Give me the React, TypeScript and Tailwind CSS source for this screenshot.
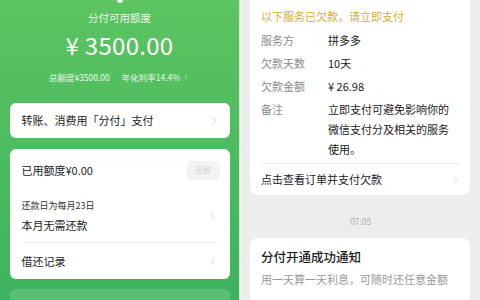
import { ChevronRight } from 'lucide-react';

const font = { fontFamily: '"Noto Sans CJK SC", "Noto Sans", sans-serif' };

const debtRows = [
  { label: '服务方', value: '拼多多' },
  { label: '欠款天数', value: '10天' },
  { label: '欠款金额', value: '¥ 26.98' },
];

export default function App() {
  return (
    <div className="flex w-[480px] h-[300px] overflow-hidden bg-[#ededed]" style={font}>
      {/* left: 分付 green page */}
      <div className="relative w-[239px] h-full shrink-0 bg-gradient-to-b from-[#5cc460] to-[#3db35f] flex flex-col items-center">
        <div className="shrink-0 w-[6px] h-[3px] rounded-b bg-white/90" />
        <div className="shrink-0 mt-[8px] text-[10.5px] leading-[14px] text-white/85">分付可用额度</div>
        <div className="shrink-0 mt-[6px] text-[24px] leading-[28px] text-white tracking-[0.3px]">¥ 3500.00</div>
        <div className="shrink-0 mt-[12px] flex items-center text-[8.5px] leading-[12px] text-white/85">
          <span>总额度¥3500.00</span>
          <span className="ml-[12px]">年化利率14.4%</span>
          <ChevronRight className="ml-[2px] w-[8px] h-[8px] text-white/70" strokeWidth={2} />
        </div>

        <div className="shrink-0 mt-[20px] w-[220px] h-[35px] rounded-[6px] bg-white flex items-center justify-between pl-[12px] pr-[10px]">
          <span className="text-[11px] text-[#222]">转账、消费用「分付」支付</span>
          <ChevronRight className="w-[11px] h-[11px] text-[#bbb]" strokeWidth={1.6} />
        </div>

        <div className="shrink-0 mt-[11px] w-[220px] rounded-[6px] bg-white pl-[12px] pr-[10px]">
          <div className="h-[42px] flex items-center justify-between">
            <span className="text-[11px] text-[#222]">已用额度¥0.00</span>
            <span className="w-[33px] h-[19px] rounded-[4px] bg-[#f3f3f3] text-[8px] text-[#d0d0d0] flex items-center justify-center">还款</span>
          </div>
          <div className="h-[52px] flex items-center justify-between border-b border-[#f0f0f0] mr-[2px]">
            <div className="flex flex-col">
              <span className="text-[9px] leading-[12px] text-[#333]">还款日为每月23日</span>
              <span className="mt-[5px] text-[11px] leading-[16px] text-[#222]">本月无需还款</span>
            </div>
            <ChevronRight className="w-[11px] h-[11px] text-[#bbb]" strokeWidth={1.6} />
          </div>
          <div className="h-[36px] flex items-center justify-between mr-[2px]">
            <span className="text-[11px] text-[#222]">借还记录</span>
            <ChevronRight className="w-[11px] h-[11px] text-[#bbb]" strokeWidth={1.6} />
          </div>
        </div>

        <div className="shrink-0 mt-[10px] w-[220px] h-[30px] rounded-[6px] bg-white/15" />
      </div>

      <div className="w-[2px] h-full shrink-0 bg-[#f7f7f7] border-l border-[#d8e6d8]" />

      {/* right: notification list */}
      <div className="flex-1 h-full flex flex-col bg-[#ededed]">
        <div className="shrink-0 ml-[9px] mr-[10px] -mt-[8px] rounded-[8px] bg-white pl-[11px] pr-[9px] pt-[16px]">
          <div className="text-[11px] leading-[16px] text-[#d1ad3c]">以下服务已欠款，请立即支付</div>
          <div className="mt-[7px] flex flex-col gap-[5px]">
            {debtRows.map((r) => (
              <div key={r.label} className="flex text-[11px] leading-[18px]">
                <span className="w-[67px] text-[#8a8a8a]">{r.label}</span>
                <span className="text-[#1a1a1a]">{r.value}</span>
              </div>
            ))}
            <div className="flex text-[11px] leading-[20px] mt-[-1px]">
              <span className="w-[67px] text-[#8a8a8a] shrink-0">备注</span>
              <span className="w-[124px] text-[#1a1a1a]">立即支付可避免影响你的微信支付分及相关的服务使用。</span>
            </div>
          </div>
          <div className="mt-[4px] h-[32px] flex items-center justify-between border-t border-[#efefef]">
            <span className="text-[11px] text-[#1a1a1a]">点击查看订单并支付欠款</span>
            <ChevronRight className="w-[11px] h-[11px] text-[#c0c0c0]" strokeWidth={1.6} />
          </div>
        </div>

        <div className="shrink-0 mt-[20px] text-center text-[8.5px] leading-[12px] text-[#b0b0b0]">07:05</div>

        <div className="shrink-0 mt-[11px] ml-[9px] mr-[10px] rounded-[8px] bg-white pl-[11px] pt-[10px] h-[80px]">
          <div className="text-[12.5px] leading-[18px] text-[#1a1a1a] font-medium">分付开通成功通知</div>
          <div className="mt-[5px] text-[11px] leading-[16px] text-[#9a9a9a]">用一天算一天利息，可随时还任意金额</div>
        </div>
      </div>
    </div>
  );
}
